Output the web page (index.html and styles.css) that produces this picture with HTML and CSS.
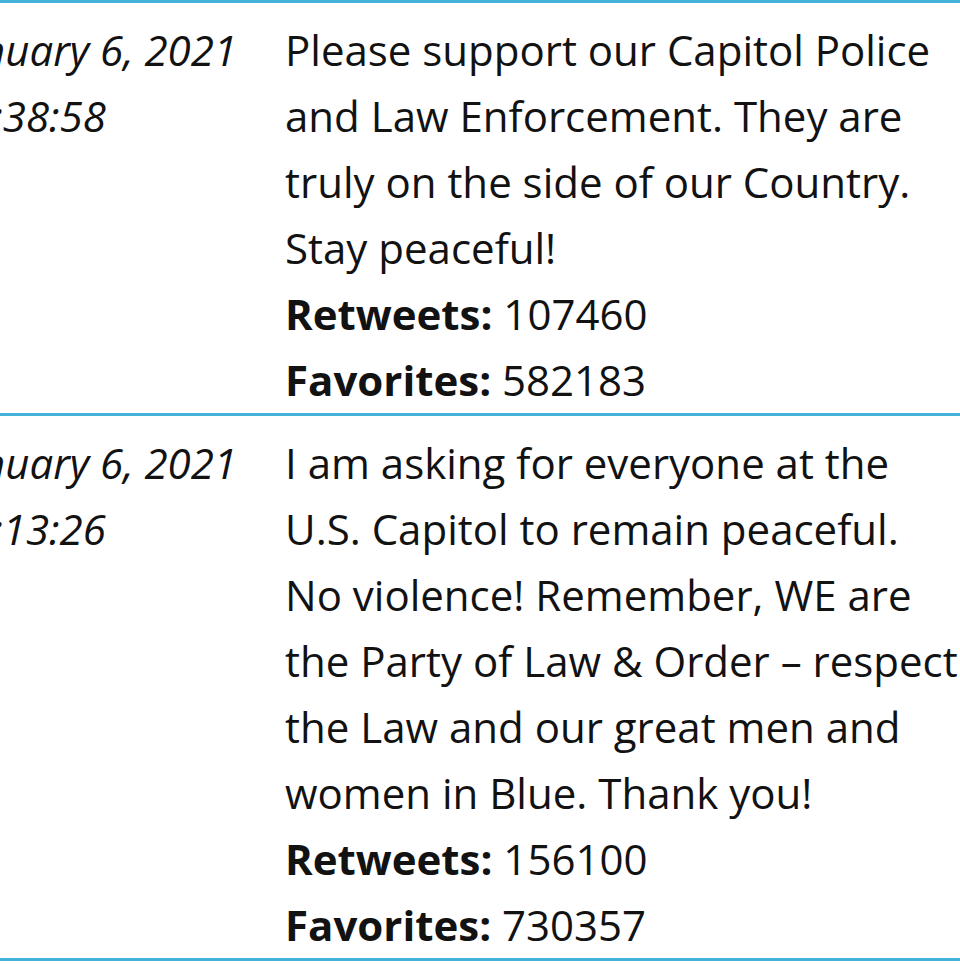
FILE: index.html
```html
<!DOCTYPE html>
<html lang="en">
<head>
<meta charset="utf-8">
<title>Tweets</title>
<link rel="stylesheet" href="styles.css">
</head>
<body>
<div class="viewport">
  <table class="tweets">
    <tbody>
      <tr>
        <td class="date">January 6, 2021<br>19:38:58</td>
        <td class="text">Please support our Capitol Police and Law Enforcement. They are truly on the side of our Country. Stay peaceful!<br><strong>Retweets:</strong> 107460<br><strong>Favorites:</strong> 582183</td>
      </tr>
      <tr>
        <td class="date">January 6, 2021<br>20:13:26</td>
        <td class="text">I am asking for everyone at the U.S. Capitol to remain peaceful. No violence! Remember, WE are the Party of Law &amp; Order – respect the Law and our great men and women in Blue. Thank you!<br><strong>Retweets:</strong> 156100<br><strong>Favorites:</strong> 730357</td>
      </tr>
    </tbody>
  </table>
</div>
</body>
</html>
```
FILE: styles.css
```css
html, body {
  margin: 0;
  padding: 0;
  background: #ffffff;
}
body {
  width: 960px;
  overflow: hidden;
}
.viewport {
  margin-left: -78px;
  width: 1060px;
}
.tweets {
  border-collapse: collapse;
  font-family: "Open Sans", sans-serif;
  font-size: 42px;
  line-height: 66px;
  color: #121212;
}
.tweets tr {
  border-top: 3px solid #45b3d9;
  border-bottom: 3px solid #45b3d9;
}
.tweets td {
  vertical-align: top;
  padding: 14px 24px 0;
}
.date {
  font-style: italic;
  white-space: nowrap;
}
.text {
  width: 676px;
}
.text strong {
  font-weight: 700;
}
```
